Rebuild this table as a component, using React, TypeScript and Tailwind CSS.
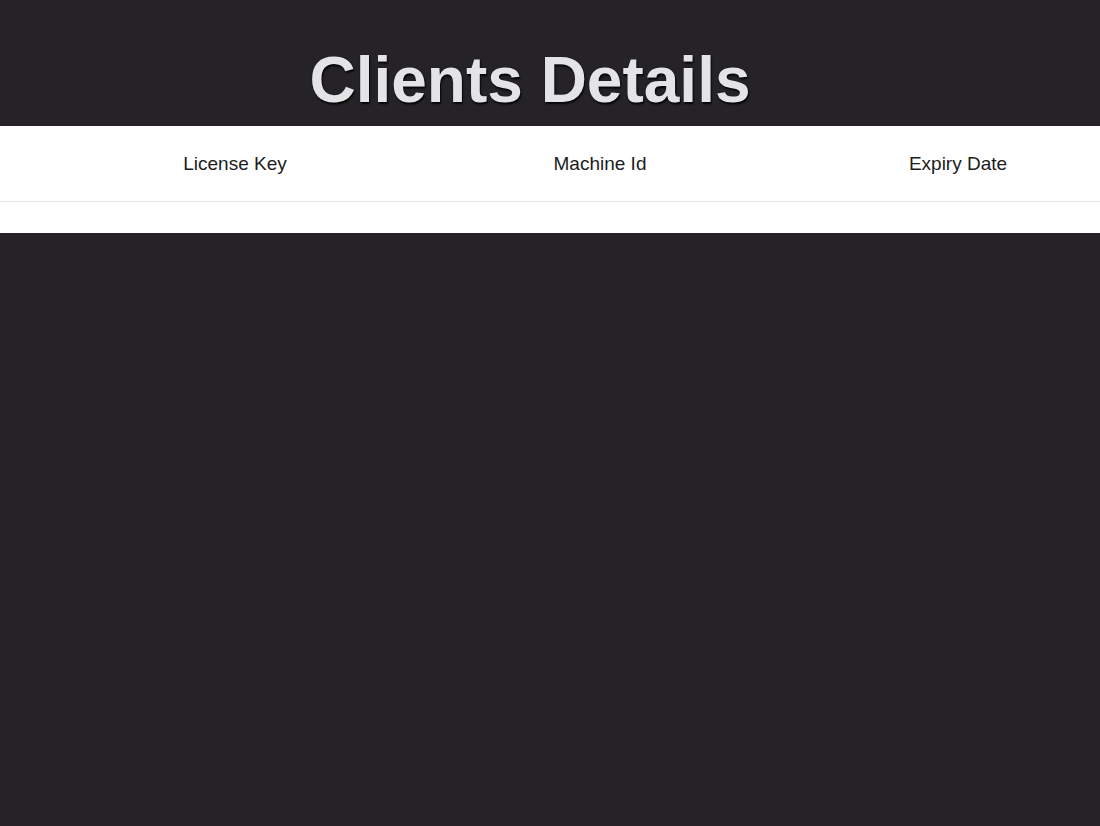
export default function App() {
  const columns = ["License Key", "Machine Id", "Expiry Date"];

  return (
    <div className="min-h-[826px] bg-[#252326] font-['Liberation_Sans',Arial,sans-serif]">
      {/* HEADER */}
      <div className="h-[126px] flex items-start justify-center pr-[40px] pt-[42px]">
        <h1 className="text-[64px] leading-[76px] font-bold text-[#e4e3e6] [text-shadow:0_0_1px_#000,1px_2px_2px_rgba(0,0,0,0.85)]">
          Clients Details
        </h1>
      </div>

      {/* TABLE */}
      <div className="bg-white">
        <div className="grid grid-cols-[270px_460px_256px] pl-[100px] pt-[2px] h-[76px] items-center border-b border-[#e2e2e2] text-[19px] text-[#1c1c1c]">
          {columns.map((col) => (
            <div key={col} className="text-center">
              {col}
            </div>
          ))}
        </div>
        <div className="h-[31px]" />
      </div>
    </div>
  );
}
